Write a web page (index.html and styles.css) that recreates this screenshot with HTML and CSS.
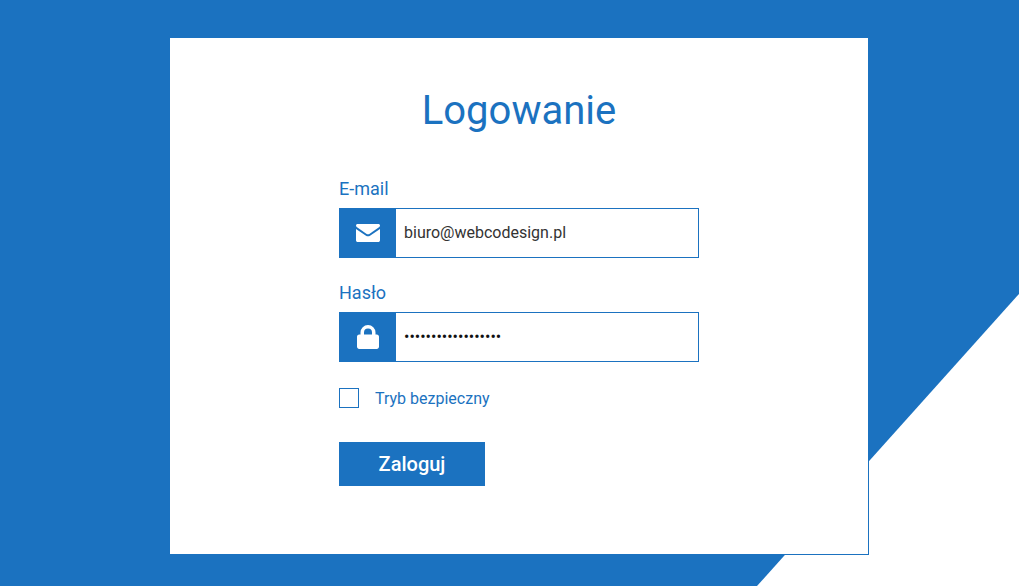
FILE: index.html
```html
<!DOCTYPE html>
<html lang="pl">
<head>
    <meta charset="UTF-8">
    <meta name="viewport" content="width=device-width, initial-scale=1.0">
    <title>Logowanie</title>
    <link rel="stylesheet" href="styles.css">
</head>
<body>
    <main class="page">
        <section class="card">
            <h1 class="card-title">Logowanie</h1>
            <form class="login-form">
                <label class="field-label" for="email">E-mail</label>
                <div class="field">
                    <span class="field-icon">
                        <svg width="24" height="18" viewBox="0 0 24 18">
                            <path fill="#fff" d="M1.6 0h20.8C23.3 0 24 .7 24 1.6c0 .6-.3 1.1-.7 1.4l-10 6.9c-.8.5-1.8.5-2.6 0L.7 3C.3 2.7 0 2.2 0 1.6 0 .7.7 0 1.6 0z"/>
                            <path fill="#fff" d="M0 4.9l10 6.8c1.2.8 2.8.8 4 0l10-6.8v11.3c0 1-.8 1.8-1.8 1.8H1.8C.8 18 0 17.2 0 16.2z"/>
                        </svg>
                    </span>
                    <input class="field-input" id="email" type="text" value="biuro@webcodesign.pl">
                </div>

                <label class="field-label" for="password">Hasło</label>
                <div class="field">
                    <span class="field-icon">
                        <svg width="22" height="24" viewBox="0 0 22 24">
                            <path fill="#fff" fill-rule="evenodd" d="M3.5 9.500V7.500a7.500 7.500 0 0 1 15 0v2h1.300C21 9.500 22 10.500 22 11.700v10.100C22 23 21 24 19.800 24H2.200C1 24 0 23 0 21.800V11.700C0 10.500 1 9.500 2.200 9.500zM7 9.500h8v-2a4 4 0 0 0-8 0z"/>
                        </svg>
                    </span>
                    <input class="field-input field-input-password" id="password" type="password" value="abcdefghijklmnopqr">
                </div>

                <label class="remember">
                    <input class="remember-box" type="checkbox">
                    <span class="remember-text">Tryb bezpieczny</span>
                </label>

                <button class="submit-btn" type="button">Zaloguj</button>
            </form>
        </section>
    </main>
</body>
</html>
```

FILE: styles.css
```css
/* Basic reset */
html, body {
    margin: 0;
    padding: 0;
    height: 100%;
    overflow: hidden;
    background-color: #fff;
    font-family: Roboto, Arial, sans-serif;
}

/* Blue background with the cut corner */
.page {
    position: relative;
    box-sizing: border-box;
    height: 586px;
    padding: 38px 0 0 170px;
}

.page::before {
    content: "";
    position: absolute;
    inset: 0;
    background-color: #1b72c0;
    clip-path: polygon(0 0, 1019px 0, 1019px 294px, 757px 586px, 0 586px);
}

/* Card */
.card {
    position: relative;
    box-sizing: border-box;
    width: 699px;
    height: 517px;
    padding-top: 48px;
    background-color: #fff;
    border-right: 1px solid #1b72c0;
    border-bottom: 1px solid #1b72c0;
}

.card-title {
    margin: 0 0 41px;
    color: #1b72c0;
    font-size: 40px;
    font-weight: 400;
    line-height: 50px;
    text-align: center;
}

/* Form */
.login-form {
    display: flex;
    flex-direction: column;
    align-items: flex-start;
    width: 360px;
    margin: 0 auto;
}

.field-label {
    margin-bottom: 7px;
    color: #1b72c0;
    font-size: 18px;
    line-height: 24px;
}

.field {
    display: flex;
    box-sizing: border-box;
    width: 360px;
    height: 50px;
    margin-bottom: 23px;
    border: 1px solid #1b72c0;
}

.field-icon {
    display: flex;
    flex: none;
    align-items: center;
    justify-content: center;
    width: 57px;
    margin: -1px 0 -1px -1px;
    background-color: #1b72c0;
}

.field-input {
    flex: 1;
    min-width: 0;
    padding: 0 8px 2px;
    border: none;
    outline: none;
    background: none;
    color: #333;
    font-family: inherit;
    font-size: 16px;
}

.field-input-password {
    color: #111;
}

.remember {
    display: flex;
    align-items: center;
    gap: 16px;
    margin: 2px 0 33px;
    color: #1b72c0;
    font-size: 16px;
    line-height: 20px;
}

.remember-text {
    padding-top: 2px;
}

.remember-box {
    appearance: none;
    box-sizing: border-box;
    width: 20px;
    height: 20px;
    margin: 0;
    border: 1px solid #1b72c0;
    background-color: #fff;
}

.submit-btn {
    width: 146px;
    height: 44px;
    padding: 0;
    border: none;
    background-color: #1b72c0;
    color: #fff;
    font-family: inherit;
    font-size: 20px;
    font-weight: 500;
    cursor: pointer;
}
```
